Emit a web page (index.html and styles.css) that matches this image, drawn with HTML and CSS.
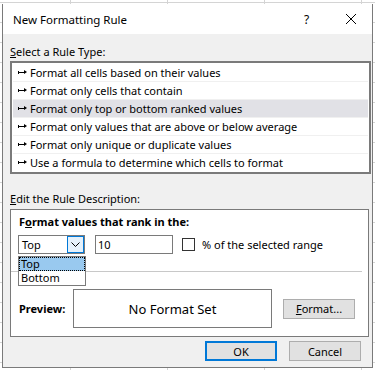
FILE: index.html
```html
<!DOCTYPE html>
<html lang="en">
<head>
    <meta charset="UTF-8">
    <title>New Formatting Rule</title>
    <link rel="stylesheet" href="styles.css">
</head>
<body>
    <div class="dialog">
        <div class="titlebar">
            <span class="title">New Formatting Rule</span>
            <span class="help">?</span>
            <span class="close">
                <svg width="12" height="12" viewBox="0 0 12 12"><path d="M1 1 L11 11 M11 1 L1 11" stroke="#000" stroke-width="1"/></svg>
            </span>
        </div>
        <div class="content">
            <div class="label"><u>S</u>elect a Rule Type:</div>
            <ul class="rule-list">
                <li><i class="arrow"></i>Format all cells based on their values</li>
                <li><i class="arrow"></i>Format only cells that contain</li>
                <li class="selected"><i class="arrow"></i>Format only top or bottom ranked values</li>
                <li><i class="arrow"></i>Format only values that are above or below average</li>
                <li><i class="arrow"></i>Format only unique or duplicate values</li>
                <li><i class="arrow"></i>Use a formula to determine which cells to format</li>
            </ul>
            <div class="label label-edit"><u>E</u>dit the Rule Description:</div>
            <div class="group">
                <div class="group-title">F<u>o</u>rmat values that rank in the:</div>
                <div class="controls">
                    <div class="combo">
                        <span class="combo-value">Top</span>
                        <span class="combo-btn">
                            <svg width="9" height="5" viewBox="0 0 9 5"><path d="M0.5 0.5 L4.5 4.5 L8.5 0.5" fill="none" stroke="#000" stroke-width="1"/></svg>
                        </span>
                        <div class="dropdown">
                            <div class="option active">Top</div>
                            <div class="option">Bottom</div>
                        </div>
                    </div>
                    <div class="textbox">10</div>
                    <label class="check"><span class="box"></span>% of the selected ran<u>g</u>e</label>
                </div>
                <div class="separator"></div>
                <div class="preview-row">
                    <span class="preview-label">Preview:</span>
                    <div class="preview">No Format Set</div>
                    <button class="btn btn-format"><u>F</u>ormat...</button>
                </div>
            </div>
            <div class="footer">
                <button class="btn btn-ok">OK</button>
                <button class="btn">Cancel</button>
            </div>
        </div>
    </div>
</body>
</html>
```

FILE: styles.css
```css
body {
    margin: 0;
    width: 375px;
    height: 370px;
    overflow: hidden;
    font-family: "Noto Sans", "Open Sans", sans-serif;
    font-size: 11px;
    color: #000;
    background-color: #fff;
    background-image:
        linear-gradient(#d4d4d4 1px, transparent 1px),
        linear-gradient(90deg, #d4d4d4 1px, transparent 1px);
    background-size: 97px 20px;
    background-position: 0 2px, 70px 0;
}
.dialog {
    margin: 4px 0 0 2px;
    width: 369px;
    height: 363px;
    border: 1px solid #7a7a7a;
    border-top: none;
    background: #f0f0f0;
    display: flex;
    flex-direction: column;
}
.titlebar {
    height: 30px;
    background: #fff;
    display: flex;
    align-items: center;
    padding-left: 10px;
}
.title {
    flex: 1;
    font-size: 11.5px;
}
.help {
    width: 14px;
    margin-right: 27px;
    font-size: 12px;
}
.close {
    width: 12px;
    margin-right: 15px;
    display: flex;
}
.content {
    padding: 0 0 0 7px;
}
.label {
    margin-top: 9px;
    height: 17px;
    line-height: 17px;
}
.label-edit {
    margin-top: 16px;
}
.rule-list {
    list-style: none;
    margin: 1px 0 0;
    padding: 1px;
    width: 355px;
    border: 2px solid #7a7a7a;
    background: #fff;
}
.rule-list li {
    height: 17px;
    line-height: 17px;
    border-bottom: 1px solid #f0f0f0;
    padding-left: 5px;
    display: flex;
    align-items: center;
}
.rule-list li:last-child {
    border-bottom: none;
}
.rule-list li.selected {
    background: #e1e1e6;
}
.arrow {
    position: relative;
    width: 5px;
    height: 1px;
    background: #000;
    border-left: 1px solid #000;
    margin-right: 6px;
}
.arrow::before {
    content: "";
    position: absolute;
    left: -1px;
    top: -1px;
    width: 1px;
    height: 3px;
    background: #000;
}
.arrow::after {
    content: "";
    position: absolute;
    right: -3px;
    top: -2px;
    border-left: 3px solid #000;
    border-top: 2.5px solid transparent;
    border-bottom: 2.5px solid transparent;
}
.group {
    margin-top: 2px;
    width: 357px;
    height: 126px;
    border: 1px solid #7a7a7a;
    background: #fff;
}
.group-title {
    font-weight: bold;
    padding: 4px 0 0 8px;
    height: 16px;
    line-height: 16px;
}
.controls {
    display: flex;
    align-items: center;
    padding: 5px 0 0 7px;
}
.combo {
    position: relative;
    width: 67px;
    height: 19px;
    border: 1px solid #7a7a7a;
    box-sizing: border-box;
    display: flex;
    align-items: center;
}
.combo-value {
    flex: 1;
    padding-left: 3px;
}
.combo-btn {
    width: 17px;
    height: 17px;
    box-sizing: border-box;
    border: 1px solid #0078d7;
    background: #e5f1fb;
    display: flex;
    align-items: center;
    justify-content: center;
}
.dropdown {
    position: absolute;
    top: 20px;
    left: -1px;
    width: 68px;
    box-sizing: border-box;
    border: 1px solid #7a7a7a;
    background: #fff;
    z-index: 2;
}
.option {
    height: 14px;
    line-height: 14px;
    padding-left: 2px;
}
.option.active {
    background: #99c9ef;
    outline: 1px dotted #000;
    outline-offset: -1px;
}
.textbox {
    margin-left: 10px;
    width: 78px;
    height: 19px;
    border: 1px solid #7a7a7a;
    box-sizing: border-box;
    padding-left: 2px;
    line-height: 17px;
}
.check {
    margin-left: 9px;
    display: flex;
    align-items: center;
}
.box {
    width: 13px;
    height: 13px;
    box-sizing: border-box;
    border: 1px solid #333;
    margin-right: 7px;
}
.separator {
    margin: 17px 6px 0 0;
    height: 1px;
    background: #c8c8c8;
}
.preview-row {
    display: flex;
    align-items: center;
    padding: 17px 0 0 8px;
}
.preview-label {
    font-weight: bold;
    width: 54px;
}
.preview {
    width: 199px;
    height: 39px;
    box-sizing: border-box;
    border: 1px solid #7a7a7a;
    display: flex;
    align-items: center;
    justify-content: center;
    font-size: 13px;
}
.btn {
    font-family: inherit;
    font-size: 11px;
    width: 72px;
    height: 20px;
    padding: 0;
    border: 1px solid #adadad;
    background: #e1e1e1;
    color: #000;
}
.btn-format {
    margin-left: 11px;
}
.footer {
    display: flex;
    justify-content: flex-end;
    gap: 12px;
    padding: 4px 11px 0 0;
}
.btn-ok {
    border: 2px solid #0078d7;
}
```
